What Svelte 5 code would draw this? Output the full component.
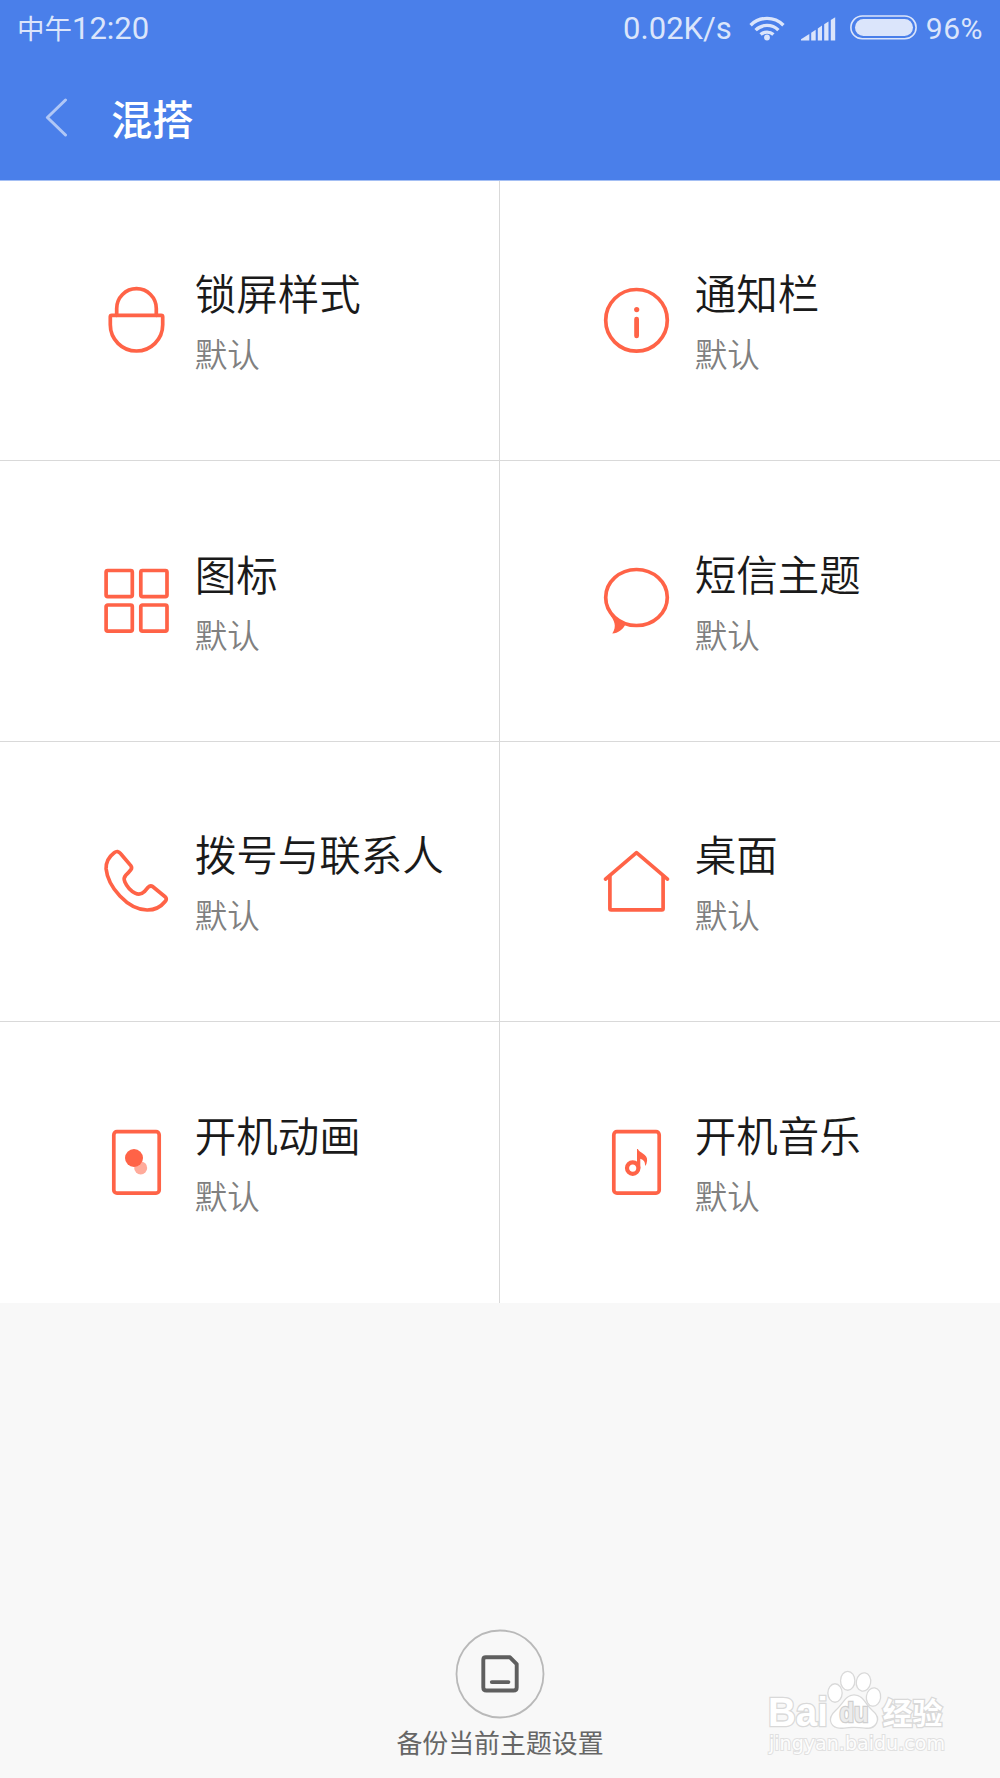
<script>
  let time = '12:20';
  let speed = '0.02K/s';
  let battery = 96;

  let items = [
    { icon: 'lock', title: '锁屏样式', value: '默认' },
    { icon: 'info', title: '通知栏', value: '默认' },
    { icon: 'grid', title: '图标', value: '默认' },
    { icon: 'message', title: '短信主题', value: '默认' },
    { icon: 'phone', title: '拨号与联系人', value: '默认' },
    { icon: 'home', title: '桌面', value: '默认' },
    { icon: 'animation', title: '开机动画', value: '默认' },
    { icon: 'music', title: '开机音乐', value: '默认' }
  ];
</script>

<div class="page">
  <header>
    <div class="status-bar">
      <div class="clock"><span class="noon">中午</span><span>{time}</span></div>
      <div class="status-right">
        <span class="speed">{speed}</span>
        <svg class="wifi" width="36" height="26" viewBox="0 0 36 26">
          <g fill="none" stroke="currentColor" stroke-width="3.4">
            <path d="M1.6 10.2A23.2 23.2 0 0 1 34.4 10.2" />
            <path d="M6.6 15.1A16.2 16.2 0 0 1 29.4 15.1" />
            <path d="M11.6 19.6A9.6 9.6 0 0 1 24.4 19.6" />
          </g>
          <circle cx="18" cy="22.5" r="2.9" fill="currentColor" />
        </svg>
        <svg class="signal" width="35" height="24" viewBox="0 0 35 24">
          <g fill="currentColor">
            <path d="M0 23.5V22.2L8.3 17V23.5Z" />
            <path d="M10.2 23.5V15.8L14.7 12.8V23.5Z" />
            <path d="M16.8 23.5V11.4L21 8.6V23.5Z" />
            <path d="M23.2 23.5V7.2L27.5 4.4V23.5Z" />
            <path d="M29.8 23.5V3L34.2 0.2V23.5Z" />
          </g>
        </svg>
        <svg class="battery" width="67" height="25" viewBox="0 0 67 25">
          <rect x="0.9" y="1" width="65.2" height="22.8" rx="11.4" fill="none" stroke="currentColor" stroke-width="1.6" />
          <rect x="5" y="3.9" width="58" height="17" rx="8.5" fill="currentColor" />
        </svg>
        <span class="percent">{battery}%</span>
      </div>
    </div>
    <div class="title-bar">
      <svg class="back" width="24" height="40" viewBox="0 0 24 40">
        <path d="M20.5 2L2.4 19.5L20.5 37" fill="none" stroke="currentColor" stroke-width="3" stroke-linecap="round" stroke-linejoin="round" />
      </svg>
      <h1>混搭</h1>
    </div>
  </header>

  <main>
    {#each items as item}
      <div class="cell">
        <svg class="icon" viewBox="-36.5 -36.3 72 72">
          {#if item.icon === 'lock'}
            <path d="M-19.8 -5V-11.8A19.8 19.8 0 0 1 19.8 -11.8V-5" />
            <path d="M-24.7 -5H24.7Q26.2 -5 26.2 -3.5V4.5A26.2 26.2 0 0 1 -26.2 4.5V-3.5Q-26.2 -5 -24.7 -5Z" />
          {:else if item.icon === 'info'}
            <circle cx="0" cy="0" r="30.8" />
            <circle class="solid" cx="0.2" cy="-10.7" r="2.6" />
            <path class="stem" d="M0.1 -1.2V15.6" />
          {:else if item.icon === 'grid'}
            <rect x="-30.4" y="-30.8" width="26.2" height="26.2" rx="1.6" />
            <rect x="4.3" y="-30.8" width="26.2" height="26.2" rx="1.6" />
            <rect x="-30.4" y="3.7" width="26.2" height="26.2" rx="1.6" />
            <rect x="4.3" y="3.7" width="26.2" height="26.2" rx="1.6" />
          {:else if item.icon === 'message'}
            <ellipse cx="0" cy="-3.8" rx="30.8" ry="28" />
            <path class="solid" d="M-26.4 13.8C-22.5 19 -19.2 25.2 -24.2 32.2C-18 31.6 -14 28.4 -11.2 23.4L-18 18Z" />
          {:else if item.icon === 'phone'}
            <path d="M-22.3 -28.6Q-18.8 -31.4 -15.8 -27.6L-5.5 -15.4Q-4.2 -13.4 -5.8 -11.4Q-7.4 -9.2 -10.6 -6.2Q-13.4 -3.4 -11.6 0.6Q-8.4 8 -1.4 11.8Q3.6 14.4 7.8 10.4L11.6 6Q13.8 3.8 16.4 5.4L28.6 15.4Q31 17.4 28.6 20.2Q21.8 28.8 10.6 28.7C-9 28.6 -28.6 5.4 -30.4 -12.4Q-30.8 -22.2 -22.3 -28.6Z" />
          {:else if item.icon === 'home'}
            <path d="M-31 -2.2L0 -28.7L31 -2.2" />
            <path d="M-26.6 -5V27.4Q-26.6 28.6 -25.4 28.6H25.4Q26.6 28.6 26.6 27.4V-5" />
          {:else if item.icon === 'animation'}
            <rect x="-22.7" y="-30.6" width="45.4" height="61.4" rx="3.2" />
            <circle class="faded" cx="4.2" cy="5.6" r="6.5" />
            <circle class="solid" cx="-2.5" cy="-4.3" r="9" />
          {:else}
            <rect x="-22.7" y="-30.6" width="45.4" height="61.4" rx="3.2" />
            <circle class="ring" cx="-3.8" cy="5.8" r="5.7" />
            <path class="solid" d="M0.5 -13.2H1.4C2.4 -9.4 11.4 -8.2 10.6 -1.6Q10.4 1.4 8.6 3.6Q9 -2.4 3.8 -3.6V6H0.5Z" />
          {/if}
        </svg>
        <div class="text">
          <h2>{item.title}</h2>
          <p>{item.value}</p>
        </div>
      </div>
    {/each}
  </main>

  <footer>
    <button aria-label="备份当前主题设置">
      <svg width="90" height="90" viewBox="-45 -45 90 90">
        <circle cx="0" cy="0" r="43.5" fill="none" stroke="#b9b9b9" stroke-width="1.8" />
        <g fill="none" stroke="#5f5f5f" stroke-width="3.9" stroke-linecap="round" stroke-linejoin="round">
          <path d="M-14.2 -16.7H10L16.7 -9.8V13.4Q16.7 16.5 13.6 16.5H-13.6Q-16.7 16.5 -16.7 13.4V-14.2Q-16.7 -16.7 -14.2 -16.7Z" />
          <path d="M-8.2 8.1H8.4" />
        </g>
      </svg>
    </button>
    <span>备份当前主题设置</span>
  </footer>

  <svg class="watermark" width="190" height="100" viewBox="0 0 190 100">
    <g class="logo">
      <text class="bai" x="5" y="56" textLength="60" lengthAdjust="spacingAndGlyphs">Bai</text>
      <ellipse cx="72" cy="23" rx="6.5" ry="8.6" />
      <ellipse cx="84.7" cy="10.8" rx="6.5" ry="8.8" />
      <ellipse cx="100.5" cy="12" rx="6.5" ry="8.6" transform="rotate(10 100.5 12)" />
      <ellipse cx="110.5" cy="27" rx="6.5" ry="8.6" transform="rotate(8 110.5 27)" />
      <path d="M91 25.5C100 25.5 102 35 109 41C119 49 112 59 102 57.4C95 56.4 87 56.4 81 57.4C68 59 64 49 73 41C80 35 83 25.5 91 25.5Z" />
      <text class="du" x="76.5" y="52" textLength="29" lengthAdjust="spacingAndGlyphs">du</text>
      <text class="cn" x="119.5" y="54">经验</text>
    </g>
    <text class="url" x="6" y="80" textLength="176" lengthAdjust="spacingAndGlyphs">jingyan.baidu.com</text>
  </svg>
</div>

<style>
  :global(body) {
    background: #f8f8f8;
  }

  .page {
    position: relative;
    display: flex;
    flex-direction: column;
    width: 1000px;
    height: 1778px;
    overflow: hidden;
    background: #f8f8f8;
    font-family: "Noto Sans CJK SC", sans-serif;
  }

  h1,
  h2,
  p {
    margin: 0;
    font-weight: 400;
  }

  header {
    height: 181px;
    box-sizing: border-box;
    background: #4a7fea;
    border-bottom: 1px solid #a4bff4;
  }

  .status-bar {
    display: flex;
    justify-content: space-between;
    align-items: center;
    height: 58px;
    padding: 0 17px 0 17px;
    color: #dbe5fb;
    font-family: Roboto, "Noto Sans CJK SC", sans-serif;
    font-size: 31px;
    line-height: 58px;
  }

  .clock,
  .status-right {
    display: flex;
    align-items: center;
  }

  .noon {
    padding-top: 1px;
    font-size: 27.5px;
  }

  .speed {
    margin-left: -1px;
  }

  .wifi {
    margin: -3px 0 0 17px;
  }

  .signal {
    margin: 0 0 0 16px;
  }

  .battery {
    margin: -3px 9px 0 14px;
  }

  .percent {
    font-size: 30px;
    letter-spacing: 0.5px;
  }

  .title-bar {
    display: flex;
    align-items: center;
    height: 120px;
    padding-left: 45px;
  }

  .back {
    color: #b0c7f6;
  }

  h1 {
    margin-left: 42px;
    padding-bottom: 2px;
    color: #fff;
    font-size: 41.3px;
    font-weight: 500;
    line-height: 118px;
  }

  main {
    display: grid;
    grid-template-columns: 500px 500px;
    grid-auto-rows: 280.6px;
    margin-top: -1px;
    padding-top: 0.5px;
    background: #fff;
    background-clip: content-box;
  }

  .cell {
    display: flex;
    align-items: center;
    box-sizing: border-box;
    padding-left: 100.4px;
    border-bottom: 1px solid #d9d9d9;
  }

  .cell:nth-child(odd) {
    border-right: 1px solid #d9d9d9;
  }

  .cell:nth-last-child(-n + 2) {
    border-bottom: none;
    padding-bottom: 2px;
  }

  .icon {
    width: 72px;
    height: 72px;
    margin-right: 22.3px;
    fill: none;
    stroke: #ff6347;
    stroke-width: 3.7;
    stroke-linecap: round;
    stroke-linejoin: round;
  }

  .icon .solid {
    fill: #ff6347;
    stroke: none;
  }

  .icon .faded {
    fill: #ffab9b;
    stroke: none;
  }

  .icon .stem {
    stroke-width: 4.8;
  }

  .icon .ring {
    stroke-width: 4.2;
  }

  .text {
    padding-top: 6px;
  }

  h2 {
    color: #1a1a1a;
    font-size: 41.5px;
    font-weight: 350;
    line-height: 60px;
  }

  p {
    color: #808080;
    font-size: 32.6px;
    font-weight: 350;
    line-height: 62px;
  }

  footer {
    display: flex;
    flex-direction: column;
    align-items: center;
    margin-top: auto;
    padding-bottom: 16px;
    color: #666;
    font-size: 25.9px;
    line-height: 40px;
  }

  button {
    display: block;
    width: 90px;
    height: 90px;
    margin-bottom: 3px;
    padding: 0;
    border: none;
    background: none;
  }

  .watermark {
    position: absolute;
    left: 763px;
    top: 1670px;
    font-family: "Liberation Sans", sans-serif;
  }

  .watermark .logo {
    fill: #fff;
    stroke: #d9d9d9;
    stroke-width: 2.6;
    paint-order: stroke;
  }

  .bai {
    font-size: 41px;
    font-weight: 700;
  }

  .watermark .du {
    fill: #ececec;
    stroke: #cfcfcf;
    font-size: 27px;
    font-weight: 700;
  }

  .cn {
    font-family: "Noto Sans CJK SC", sans-serif;
    font-size: 30px;
    font-weight: 700;
  }

  .url {
    fill: #fdfdfd;
    stroke: #e0e0e0;
    stroke-width: 2;
    paint-order: stroke;
    font-family: "DejaVu Sans", sans-serif;
    font-size: 20px;
  }
</style>
